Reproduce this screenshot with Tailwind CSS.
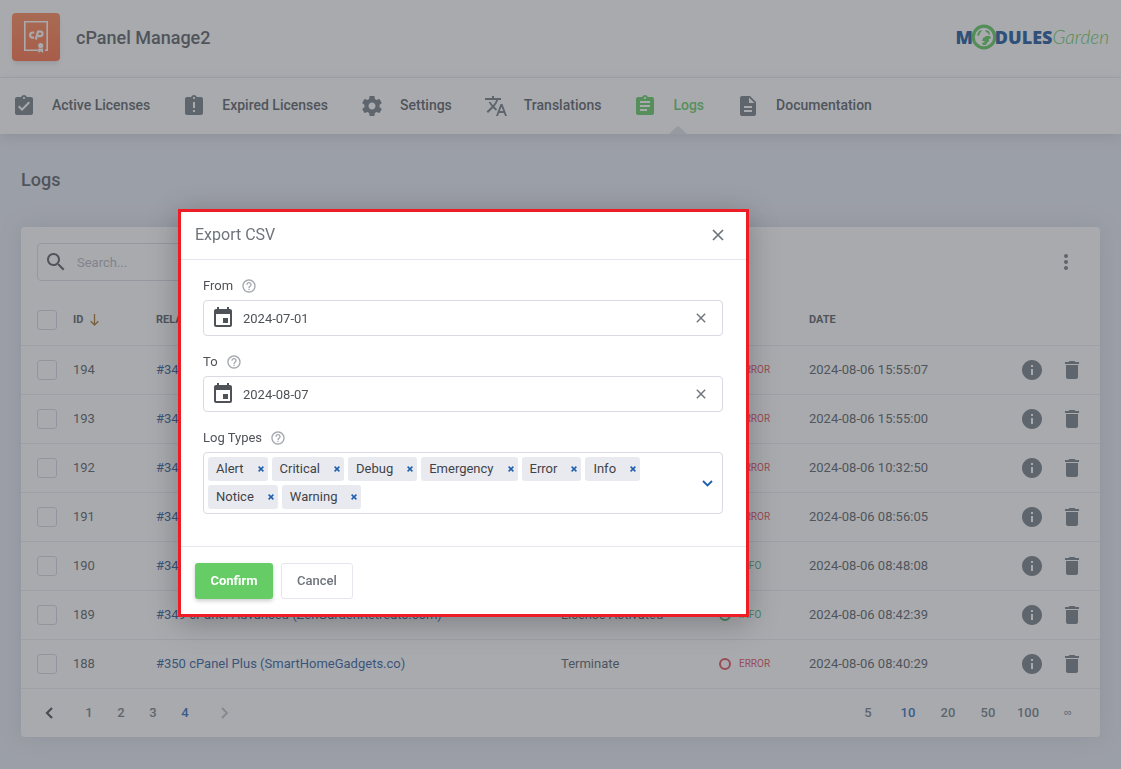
<!DOCTYPE html>
<html lang="en">
<head>
<meta charset="utf-8">
<title>cPanel Manage2 - Logs</title>
<script src="https://cdn.jsdelivr.net/npm/@tailwindcss/browser@4"></script>
</head>
<body class="min-h-screen bg-[#e5e8f0] font-[Roboto,sans-serif] text-[13px] text-[#4f5358]">
<svg class="hidden" aria-hidden="true">
  <symbol id="info" viewBox="0 0 24 24"><path d="M12 2C6.480 2 2 6.480 2 12s4.480 10 10 10 10-4.480 10-10S17.520 2 12 2zm1 15h-2v-6h2v6zm0-8h-2V7h2v2z"/></symbol>
  <symbol id="trash" viewBox="0 0 24 24"><path d="M6 19c0 1.100.9 2 2 2h8c1.100 0 2-.9 2-2V7H6v12zM19 4h-3.500l-1-1h-5l-1 1H5v2h14V4z"/></symbol>
  <symbol id="calendar" viewBox="0 0 24 24"><path d="M17 12h-5v5h5v-5zM16 1v2H8V1H6v2H5c-1.110 0-1.990.9-1.990 2L3 19c0 1.100.89 2 2 2h14c1.100 0 2-.9 2-2V5c0-1.100-.9-2-2-2h-1V1h-2zm3 18H5V8h14v11z"/></symbol>
  <symbol id="help" viewBox="0 0 24 24"><path d="M11 18h2v-2h-2v2zm1-16C6.480 2 2 6.480 2 12s4.480 10 10 10 10-4.480 10-10S17.520 2 12 2zm0 18c-4.410 0-8-3.590-8-8s3.590-8 8-8 8 3.590 8 8-3.590 8-8 8zm0-14c-2.210 0-4 1.790-4 4h2c0-1.100.9-2 2-2s2 .9 2 2c0 2-3 1.750-3 5h2c0-2.250 3-2.500 3-5 0-2.210-1.790-4-4-4z"/></symbol>
  <symbol id="cross" viewBox="0 0 12 12"><path d="M1 1l10 10M11 1L1 11" fill="none" stroke="currentColor" stroke-width="1.700"/></symbol>
  <symbol id="tagx" viewBox="0 0 6 6"><path d="M.6.6l4.800 4.800M5.400.6L.6 5.400" fill="none" stroke="currentColor" stroke-width="1.500"/></symbol>
</svg>

<header class="bg-white">
  <div class="flex h-[78px] items-center border-b border-[#eceef3] pr-3 pb-1 pl-3">
    <div class="flex size-12 items-center justify-center rounded bg-linear-to-b from-[#ff7f48] to-[#ff6436] shadow-md">
      <svg class="size-12" viewBox="0 0 48 48" fill="none" stroke="#fff">
        <path d="M26 37.200H12.800V8.800h22.400v28.400H33" stroke-width="1.600"/>
        <path d="M22.300 19.500h-1.600a2.600 2.600 0 0 0 0 5.200h1.400M23.800 26.500l2.200-8h2.200a2.300 2.300 0 0 1 0 4.700h-2.200" stroke-width="2.200"/>
        <circle cx="28.700" cy="32.500" r="2.600" fill="#fff" stroke="none"/>
        <path d="M26.300 35.500v4.500l2.400-1.700 2.400 1.700v-4.500z" fill="#fff" stroke="none"/>
      </svg>
    </div>
    <h1 class="ml-4 pt-[2px] text-lg font-medium">cPanel Manage2</h1>
    <a href="#" class="ml-auto flex items-center leading-none" aria-label="ModulesGarden">
      <span class="font-['Open_Sans'] text-[18px] font-extrabold text-[#0a4a94]">M</span>
      <svg class="-mx-[2px] size-[26px]" viewBox="0 0 26 26">
        <circle cx="13" cy="13" r="10.800" fill="#fff" stroke="#55c451" stroke-width="3.200"/>
        <path d="M6 11l2-4 3-1-1 2-1 1-1 3zM14 6l4 1 1 3-1 1-1-2-2-1zM12 14l2-1 1-1 4 0 1 2-2 1 0 2-2 2-1 2-3 0-1-2 3-1-1-1-2 0z" fill="#55c451"/>
      </svg>
      <span class="font-['Open_Sans'] text-[18px] font-extrabold text-[#0a4a94]">DULES</span>
      <span class="font-[Lato] text-[19px] font-light text-[#55c451] italic">Garden</span>
    </a>
  </div>
  <nav class="flex h-14 items-stretch pl-3 text-sm font-medium shadow-[0_3px_12px_rgba(90,100,105,0.2)]">
    <a href="#" class="mr-8 flex items-center gap-4">
      <svg class="size-6 fill-[#6d747c]" viewBox="0 0 24 24"><path d="M19 3h-4.180C14.400 1.840 13.300 1 12 1c-1.300 0-2.400.840-2.820 2H5c-1.100 0-2 .9-2 2v14c0 1.100.9 2 2 2h14c1.100 0 2-.9 2-2V5c0-1.100-.9-2-2-2zm-7 0c.55 0 1 .45 1 1s-.45 1-1 1-1-.45-1-1 .45-1 1-1zm-2 14l-4-4 1.410-1.410L10 14.170l6.590-6.590L18 9l-8 8z"/></svg><span class="pb-[2px]">Active Licenses</span></a>
    <a href="#" class="mr-8 flex items-center gap-4">
      <svg class="size-6 fill-[#6d747c]" viewBox="0 0 24 24"><path d="M19 3h-4.180C14.400 1.840 13.300 1 12 1c-1.300 0-2.400.840-2.820 2H5c-1.100 0-2 .9-2 2v14c0 1.100.9 2 2 2h14c1.100 0 2-.9 2-2V5c0-1.100-.9-2-2-2zm-6 15h-2v-2h2v2zm0-4h-2V8h2v6zm-1-9c-.55 0-1-.45-1-1s.45-1 1-1 1 .45 1 1-.45 1-1 1z"/></svg><span class="pb-[2px]">Expired Licenses</span></a>
    <a href="#" class="mr-8 flex items-center gap-4">
      <svg class="size-6 fill-[#6d747c]" viewBox="0 0 24 24"><path d="M19.430 12.980c.04-.32.07-.64.07-.98s-.03-.66-.07-.98l2.110-1.650c.19-.15.24-.42.12-.64l-2-3.460c-.12-.22-.39-.3-.61-.22l-2.490 1c-.52-.4-1.080-.73-1.690-.98l-.38-2.650C14.460 2.180 14.250 2 14 2h-4c-.25 0-.46.18-.49.42l-.38 2.650c-.61.25-1.170.59-1.690.98l-2.490-1c-.23-.09-.49 0-.61.22l-2 3.460c-.13.22-.07.49.12.64l2.110 1.650c-.04.32-.07.65-.07.98s.03.66.07.98l-2.110 1.650c-.19.15-.24.42-.12.64l2 3.460c.12.22.39.3.61.22l2.490-1c.52.4 1.080.73 1.690.98l.38 2.650c.03.24.24.42.49.42h4c.25 0 .46-.18.49-.42l.38-2.650c.61-.25 1.170-.59 1.690-.98l2.490 1c.23.09.49 0 .61-.22l2-3.460c.12-.22.07-.49-.12-.64l-2.110-1.650zM12 15.500c-1.930 0-3.500-1.570-3.500-3.500s1.570-3.500 3.500-3.500 3.500 1.570 3.500 3.500-1.570 3.500-3.500 3.500z"/></svg><span class="pb-[2px]">Settings</span></a>
    <a href="#" class="mr-8 flex items-center gap-4">
      <svg class="size-6 fill-[#6d747c]" viewBox="0 0 24 24"><path d="M12.870 15.070l-2.540-2.510.03-.03c1.740-1.940 2.980-4.170 3.710-6.530H17V4h-7V2H8v2H1v1.990h11.170C11.500 7.920 10.440 9.750 9 11.350 8.070 10.320 7.300 9.190 6.690 8h-2c.73 1.630 1.730 3.170 2.980 4.560l-5.090 5.020L4 19l5-5 3.110 3.110.76-2.040zM18.500 10h-2L12 22h2l1.120-3h4.750L21 22h2l-4.500-12zm-2.620 7l1.620-4.330L19.120 17h-3.240z"/></svg><span class="pb-[2px]">Translations</span></a>
    <a href="#" class="relative mr-8 flex items-center gap-4 text-[#5bc95b]" aria-current="page">
      <svg class="size-6 fill-[#5bc95b]" viewBox="0 0 24 24"><path d="M19 3h-4.180C14.400 1.840 13.300 1 12 1c-1.300 0-2.400.840-2.820 2H5c-1.100 0-2 .9-2 2v14c0 1.100.9 2 2 2h14c1.100 0 2-.9 2-2V5c0-1.100-.9-2-2-2zm-7 0c.55 0 1 .45 1 1s-.45 1-1 1-1-.45-1-1 .45-1 1-1zm2 14H7v-2h7v2zm3-4H7v-2h10v2zm0-4H7V7h10v2z"/></svg><span class="pb-[2px]">Logs</span>
      <svg class="absolute bottom-0 left-1/2 h-2 w-[18px] fill-[#dcdfe5]" viewBox="0 0 18 8"><path d="M0 8L8 .5Q9 0 10 .5L18 8z"/></svg></a>
    <a href="#" class="flex items-center gap-4">
      <svg class="size-6 fill-[#6d747c]" viewBox="0 0 24 24"><path d="M14 2H6c-1.100 0-1.990.9-1.990 2L4 20c0 1.100.89 2 1.990 2H18c1.100 0 2-.9 2-2V8l-6-6zm2 16H8v-2h8v2zm0-4H8v-2h8v2zm-3-5V3.500L18.500 9H13z"/></svg><span class="pb-[2px]">Documentation</span></a>
  </nav>
</header>

<main class="px-[21px] py-8">
  <h2 class="text-lg leading-7 font-medium">Logs</h2>
  <section class="mt-[33px] rounded bg-white shadow-[0_0_22px_rgba(90,100,105,0.17)]">
    <div class="flex h-[69px] items-start justify-between pt-4 pr-4 pl-4">
      <label class="flex h-[38px] w-[300px] items-center rounded-sm border border-[#d8dae4] pl-[6px]">
        <svg class="size-6 shrink-0 fill-[#4f5358]" viewBox="0 0 24 24"><path d="M15.500 14h-.79l-.28-.27C15.410 12.590 16 11.110 16 9.500 16 5.910 13.090 3 9.500 3S3 5.910 3 9.500 5.910 16 9.500 16c1.610 0 3.090-.59 4.230-1.570l.27.28v.79l5 4.990L20.490 19l-4.990-5zm-6 0C7.010 14 5 11.990 5 9.500S7.010 5 9.500 5 14 7.010 14 9.500 11.990 14 9.500 14z"/></svg>
        <input type="search" aria-label="Search" placeholder="Search..." class="ml-[9px] w-full pt-[2px] outline-none placeholder:text-[#aeb2b8]">
      </label>
      <button class="flex h-[38px] w-9 items-center justify-center" aria-label="More actions"><svg class="size-6 fill-[#6d747c]" viewBox="0 0 24 24"><path d="M12 8c1.100 0 2-.9 2-2s-.9-2-2-2-2 .9-2 2 .9 2 2 2zm0 2c-1.100 0-2 .9-2 2s.9 2 2 2 2-.9 2-2-.9-2-2-2zm0 6c-1.100 0-2 .9-2 2s.9 2 2 2 2-.9 2-2-.9-2-2-2z"/></svg></button>
    </div>
    <table class="w-full table-fixed border-collapse text-left">
      <colgroup><col class="w-[52px]"><col class="w-[83px]"><col><col class="w-[158px]"><col class="w-[90px]"><col class="w-[192px]"><col class="w-[99px]"></colgroup>
      <thead>
        <tr class="h-[49px] border-b border-[#e8eaef] text-[11px]">
          <th class="pl-4"><input type="checkbox" aria-label="Select all" class="block size-5 appearance-none rounded-[3px] border border-[#d3d5df]"></th>
          <th class="font-bold"><span class="flex items-center gap-[7px]">ID <svg class="h-3 w-[9px] text-[#a36c1c]" viewBox="0 0 9 12"><path d="M4.500 0v11M.7 7.200l3.800 3.800 3.800-3.800" fill="none" stroke="currentColor" stroke-width="1.300"/></svg></span></th>
          <th class="font-bold">RELATED ITEM</th><th class="font-bold">MESSAGE</th><th class="font-bold">TYPE</th><th class="font-bold">DATE</th><th></th>
        </tr>
      </thead>
      <tbody id="rows"></tbody>
    </table>
    <div class="flex h-12 items-center justify-between pr-4 pl-3 text-[#6d747c]">
      <div class="flex items-center text-center">
        <button class="flex w-8 justify-center" aria-label="Previous page"><svg class="h-3 w-2 text-[#3f4348]" viewBox="0 0 8 12"><path d="M7 1L2 6l5 5" fill="none" stroke="currentColor" stroke-width="2.200"/></svg></button>
        <button class="ml-2 w-8 font-medium">1</button><button class="w-8 font-medium">2</button><button class="w-8 font-medium">3</button><button class="w-8 font-medium text-[#1f62b4]">4</button>
        <button class="ml-2 flex w-8 justify-center" aria-label="Next page" disabled><svg class="h-3 w-2 text-[#b9bcc2]" viewBox="0 0 8 12"><path d="M1 1l5 5-5 5" fill="none" stroke="currentColor" stroke-width="2"/></svg></button>
      </div>
      <div class="flex items-center gap-2 font-medium">
        <button class="w-8">5</button><button class="w-8 text-[#1f62b4]">10</button><button class="w-8">20</button><button class="w-8">50</button><button class="w-8">100</button><button class="w-8 font-['Liberation_Sans'] text-[11px] font-normal">∞</button>
      </div>
    </div>
  </section>
</main>

<div class="fixed inset-0 flex items-start bg-[#51565d]/50 pt-[209px] pl-[178px]">
  <div role="dialog" aria-labelledby="dlg" class="w-[571px] border-3 border-[#ee1c24] bg-white shadow-[0_6px_28px_rgba(0,0,0,0.25)]">
    <div class="flex h-12 items-center justify-between border-b border-[#e6e7ee] pr-[22px] pb-[2px] pl-[14px]">
      <h3 id="dlg" class="text-base text-[#6d747c]">Export CSV</h3>
      <button aria-label="Close" class="text-[#6d747c]"><svg class="size-3"><use href="#cross"/></svg></button>
    </div>
    <div class="flex flex-col gap-4 pt-4 pr-[23px] pb-8 pl-[22px]">
      <div>
        <div class="flex h-5 items-center gap-2"><label for="from">From</label><svg class="size-4 fill-[#a4a7ae]"><use href="#help"/></svg></div>
        <div class="mt-1 flex h-9 items-center rounded-sm border border-[#d8dae4] pr-4 pl-[7px]">
          <svg class="size-6 shrink-0 fill-[#4f5358]"><use href="#calendar"/></svg>
          <input id="from" type="text" value="2024-07-01" class="ml-2 min-w-0 flex-1 pt-[2px] outline-none">
          <button aria-label="Clear from date" class="text-[#6d747c]"><svg class="size-[10px]"><use href="#cross"/></svg></button>
        </div>
      </div>
      <div>
        <div class="flex h-5 items-center gap-2"><label for="to">To</label><svg class="size-4 fill-[#a4a7ae]"><use href="#help"/></svg></div>
        <div class="mt-1 flex h-9 items-center rounded-sm border border-[#d8dae4] pr-4 pl-[7px]">
          <svg class="size-6 shrink-0 fill-[#4f5358]"><use href="#calendar"/></svg>
          <input id="to" type="text" value="2024-08-07" class="ml-2 min-w-0 flex-1 pt-[2px] outline-none">
          <button aria-label="Clear to date" class="text-[#6d747c]"><svg class="size-[10px]"><use href="#cross"/></svg></button>
        </div>
      </div>
      <div>
        <div class="flex h-5 items-center gap-2"><span id="types">Log Types</span><svg class="size-4 fill-[#a4a7ae]"><use href="#help"/></svg></div>
        <div role="group" aria-labelledby="types" class="mt-1 flex items-center rounded-sm border border-[#d8dae4] p-1 pr-[9px]">
          <ul id="tags" class="flex flex-1 flex-wrap gap-1 pr-4"></ul>
          <button aria-label="Show log types"><svg class="h-2 w-[11px] text-[#1f5fae]" viewBox="0 0 11 8"><path d="M1 2L5.500 6.500 10 2" fill="none" stroke="currentColor" stroke-width="1.800"/></svg></button>
        </div>
      </div>
    </div>
    <div class="flex gap-2 border-t border-[#e6e7ee] pt-4 pb-[15px] pl-[14px]">
      <button class="h-9 w-[78px] rounded-[3px] bg-[#66cc66] font-bold text-white shadow-[0_2px_4px_rgba(0,0,0,0.2)]">Confirm</button>
      <button class="h-9 w-[72px] rounded-[3px] border border-[#e6e7ee] font-medium text-[#6d747c]">Cancel</button>
    </div>
  </div>
</div>

<script>
const logs = [
  [194, '#349', '', 'ERROR', '2024-08-06 15:55:07'],
  [193, '#349', '', 'ERROR', '2024-08-06 15:55:00'],
  [192, '#349', '', 'ERROR', '2024-08-06 10:32:50'],
  [191, '#349', '', 'ERROR', '2024-08-06 08:56:05'],
  [190, '#349', '', 'INFO', '2024-08-06 08:48:08'],
  [189, '#349 cPanel Advanced (ZenGardenRetreats.com)', 'License Activated', 'INFO', '2024-08-06 08:42:39'],
  [188, '#350 cPanel Plus (SmartHomeGadgets.co)', 'Terminate', 'ERROR', '2024-08-06 08:40:29'],
];
document.getElementById('rows').innerHTML = logs.map(([id, item, msg, type, date]) => `
  <tr class="h-[49px] border-b border-[#e8eaef]">
    <td class="pl-4"><input type="checkbox" aria-label="Select log ${id}" class="block size-5 appearance-none rounded-[3px] border border-[#d3d5df]"></td>
    <td>${id}</td>
    <td><a href="#" class="text-[#1f5296]">${item}</a></td>
    <td>${msg}</td>
    <td><span class="flex items-center gap-2 text-[10px] ${type === 'ERROR' ? 'text-[#e0404e]' : 'text-[#3fae60]'}"><span class="size-3 rounded-full border-2 border-current"></span>${type}</span></td>
    <td>${date}</td>
    <td><div class="flex justify-end gap-4 pr-4">
      <button aria-label="Details"><svg class="size-6 fill-[#6d747c]"><use href="#info"/></svg></button>
      <button aria-label="Delete"><svg class="size-6 fill-[#6d747c]"><use href="#trash"/></svg></button>
    </div></td>
  </tr>`).join('');
document.getElementById('tags').innerHTML = ['Alert', 'Critical', 'Debug', 'Emergency', 'Error', 'Info', 'Notice', 'Warning'].map(t => `
  <li class="flex h-6 items-center gap-[14px] rounded-[3px] bg-[#e9eaf0] pr-1 pl-2 text-[#3f4348]">${t}<button aria-label="Remove ${t}" class="text-[#1f5fae]"><svg class="size-[6px]"><use href="#tagx"/></svg></button></li>`).join('');
</script>
</body>
</html>
